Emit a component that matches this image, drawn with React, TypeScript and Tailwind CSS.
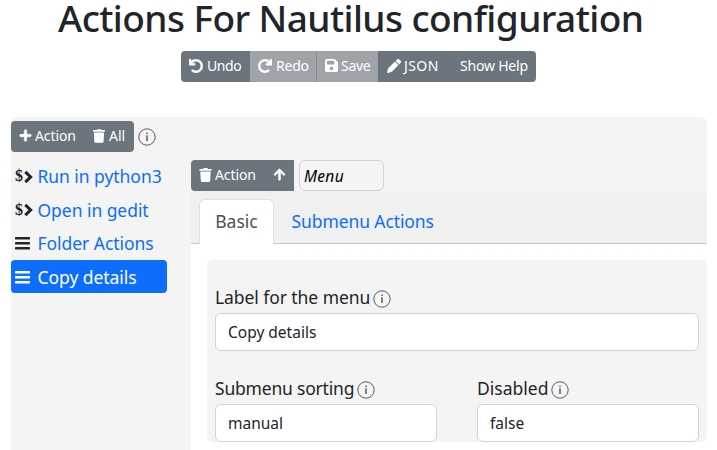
import type { ReactNode } from "react";
import { FaArrowUp, FaPlus, FaRedo, FaTrash, FaUndo } from "react-icons/fa";
import { FaFloppyDisk, FaPen } from "react-icons/fa6";

function Button({
  className = "",
  disabled = false,
  children,
}: {
  className?: string;
  disabled?: boolean;
  children?: ReactNode;
}) {
  return (
    <button
      type="button"
      disabled={disabled}
      className={`flex h-full items-center whitespace-nowrap pb-[1.5px] pl-2 text-sm leading-[21px] text-white ${
        disabled ? "bg-[#9fa3aa]" : "bg-[#6c757d]"
      } ${className}`}
    >
      {children}
    </button>
  );
}

function Info({ className = "" }: { className?: string }) {
  return (
    <svg viewBox="0 0 18 18" className={`size-[18px] shrink-0 text-[#33383d] ${className}`} fill="none">
      <circle cx="9" cy="9" r="8.2" stroke="currentColor" strokeWidth="0.8" />
      <circle cx="9" cy="5.2" r="0.8" fill="currentColor" />
      <path d="M9 7.2V13" stroke="currentColor" strokeWidth="1.2" />
    </svg>
  );
}

function Bars() {
  return (
    <svg viewBox="0 0 15 13" className="h-[13px] w-[15px]" fill="currentColor">
      <rect x="0" y="0" width="15" height="2.5" rx="0.4" />
      <rect x="0" y="5" width="15" height="2.5" rx="0.4" />
      <rect x="0" y="10" width="15" height="2.5" rx="0.4" />
    </svg>
  );
}

function Command() {
  return (
    <>
      <span className="w-[9px] pb-px font-['Liberation_Serif',serif] text-[16px] leading-none font-bold">$</span>
      <svg viewBox="0 0 9 14" className="h-[14px] w-[9px]" fill="none">
        <path d="M1.3 1.8 6.6 7 1.3 12.2" stroke="currentColor" strokeWidth="3.1" />
      </svg>
    </>
  );
}

function Item({ icon, label, active = false }: { icon: ReactNode; label: string; active?: boolean }) {
  return (
    <li
      className={`flex h-[33.6px] items-center rounded pl-1 ${
        active ? "bg-[#0d6efd] text-white" : "text-[#212529]"
      }`}
    >
      <span className="flex w-[22.5px] shrink-0 items-center pt-[2px]">{icon}</span>
      <span
        className={`pt-px text-[17.5px] tracking-[-0.05px] whitespace-nowrap ${
          active ? "text-white" : "text-[#0d6efd]"
        }`}
      >
        {label}
      </span>
    </li>
  );
}

function Field({ label, value, labelClass = "" }: { label: string; value: string; labelClass?: string }) {
  return (
    <div className="min-w-0 flex-1">
      <div className="flex h-[29px] items-start">
        <span className={`whitespace-nowrap text-[17.5px] leading-[26px] ${labelClass}`}>{label}</span>
        <Info className="mt-[6px] ml-[3px]" />
      </div>
      <div className="flex h-[38px] items-center rounded-md border border-[#ced4da] bg-white pt-px pl-3 text-[15.5px]">
        {value}
      </div>
    </div>
  );
}

export default function App() {
  return (
    <div className="h-[450px] bg-white font-['Noto_Sans','Open_Sans',sans-serif] text-[#212529]">
      <h1 className="h-[51px] pl-[58px] text-[37px] leading-[36px] font-medium tracking-[-0.57px] whitespace-nowrap">
        Actions For Nautilus configuration
      </h1>

      <div className="ml-[181px] flex h-[31px] w-[355px] overflow-hidden rounded">
        <Button className="w-[69px] tracking-[-0.4px]">
          <FaUndo className="mr-1 size-[14px]" stroke="white" strokeWidth={18} />
          Undo
        </Button>
        <Button disabled className="w-[66px] tracking-[-0.2px]">
          <FaRedo className="mr-1 size-[14px]" stroke="white" strokeWidth={18} />
          Redo
        </Button>
        <Button disabled className="w-[62px] border-l border-[#858c93] tracking-[-0.3px]">
          <FaFloppyDisk className="mr-[3px] h-[15px] w-[13px]" />
          Save
        </Button>
        <Button className="w-[74px] tracking-[0.4px]">
          <FaPen className="mr-[3px] ml-px size-[14px]" />
          JSON
        </Button>
        <Button className="w-[84px] tracking-[-0.2px]">Show Help</Button>
      </div>

      <main className="mt-[35px] mr-[10px] ml-[11px] flex h-[333px] rounded-t-md bg-[#f4f4f4]">
        <aside className="w-[180px] shrink-0 pt-1">
          <div className="flex h-[31px] items-center">
            <div className="flex h-[31px] overflow-hidden rounded">
              <Button className="w-[75px] tracking-[-0.1px]">
                <FaPlus className="mr-[3px] size-[13px]" stroke="white" strokeWidth={24} />
                Action
              </Button>
              <Button className="w-12 pl-[7px]">
                <FaTrash className="mr-1 h-[14px] w-[12px]" />
                All
              </Button>
            </div>
            <Info className="mt-px ml-1" />
          </div>
          <ul className="mt-[7px] w-[156px]">
            <Item icon={<Command />} label="Run in python3" />
            <Item icon={<Command />} label="Open in gedit" />
            <Item icon={<Bars />} label="Folder Actions" />
            <Item icon={<Bars />} label="Copy details" active />
          </ul>
        </aside>

        <section className="flex min-w-0 flex-1 flex-col pt-[43px]">
          <div className="flex h-[31px]">
            <div className="flex overflow-hidden rounded-l">
              <Button className="w-[73px] tracking-[-0.1px]">
                <FaTrash className="mr-[3px] h-[14px] w-[13px]" />
                Action
              </Button>
              <Button className="w-[30px] pl-[9px]">
                <FaArrowUp className="size-[13px]" stroke="white" strokeWidth={20} />
              </Button>
            </div>
            <div className="ml-[5px] flex w-[85px] items-center rounded-md border border-[#ced4da] pt-0.5 pl-1 text-[15.5px] tracking-[0.3px] text-black italic">
              Menu
            </div>
          </div>

          <nav className="flex h-[53px] rounded-tr-md border-b border-[#c4c5c6] bg-[#f0f0f0] pt-2 pl-2 text-[17.5px]">
            <div className="-mb-px flex w-[75px] justify-center rounded-t-md border border-b-0 border-[#dee2e6] bg-white pt-2 leading-[26px] text-[#495057]">
              Basic
            </div>
            <div className="pt-[9px] pl-[17.5px] leading-[26px] tracking-[-0.1px] text-[#0d6efd]">
              Submenu Actions
            </div>
          </nav>

          <div className="flex-1 bg-white pt-4 pl-4">
            <div className="h-[182px] rounded-md bg-[#f4f4f4] px-2 pt-6">
              <Field label="Label for the menu" value="Copy details" labelClass="tracking-[-0.07px]" />
              <div className="mt-6 flex gap-10">
                <Field label="Submenu sorting" value="manual" labelClass="tracking-[-0.2px]" />
                <Field label="Disabled" value="false" />
              </div>
            </div>
          </div>
        </section>
      </main>
    </div>
  );
}
